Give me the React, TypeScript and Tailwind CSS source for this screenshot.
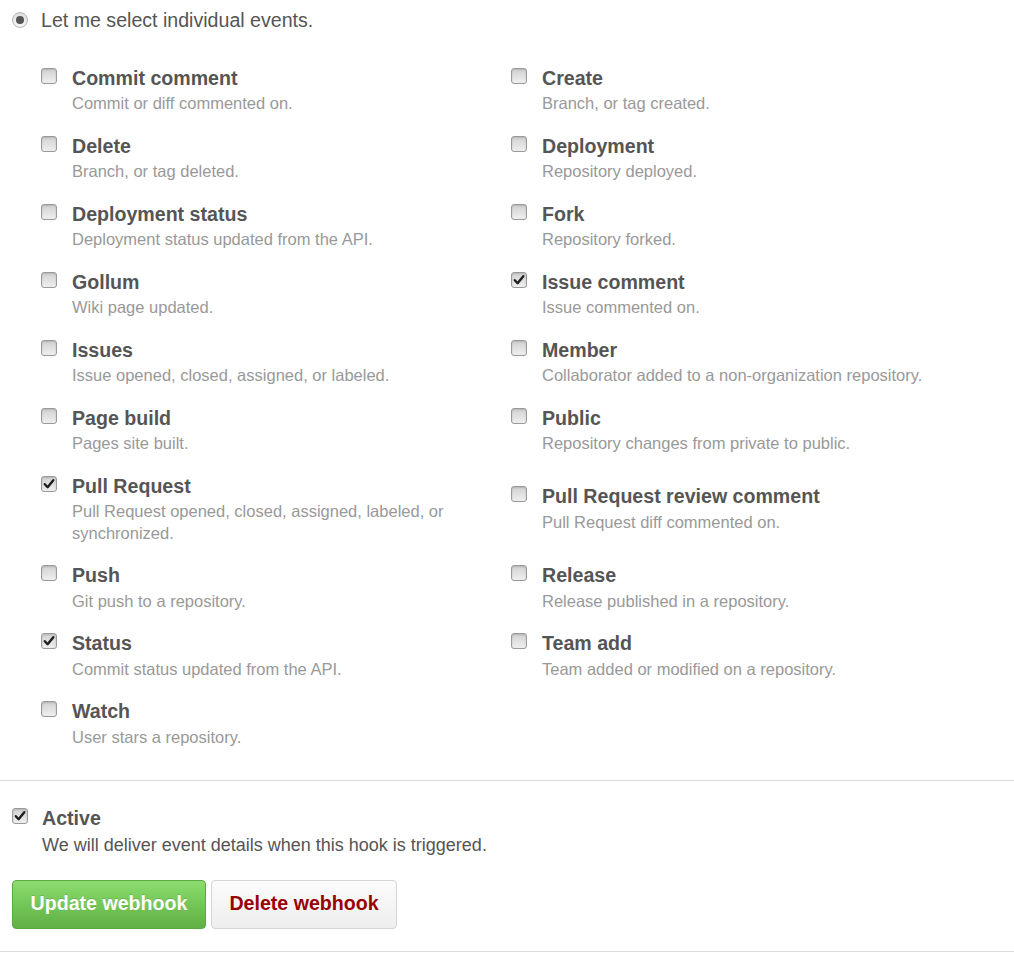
import React from "react";

type Ev = { title: string; desc: string; checked?: boolean };

const rows: [Ev, Ev | null][] = [
  [
    { title: "Commit comment", desc: "Commit or diff commented on." },
    { title: "Create", desc: "Branch, or tag created." },
  ],
  [
    { title: "Delete", desc: "Branch, or tag deleted." },
    { title: "Deployment", desc: "Repository deployed." },
  ],
  [
    { title: "Deployment status", desc: "Deployment status updated from the API." },
    { title: "Fork", desc: "Repository forked." },
  ],
  [
    { title: "Gollum", desc: "Wiki page updated." },
    { title: "Issue comment", desc: "Issue commented on.", checked: true },
  ],
  [
    { title: "Issues", desc: "Issue opened, closed, assigned, or labeled." },
    { title: "Member", desc: "Collaborator added to a non-organization repository." },
  ],
  [
    { title: "Page build", desc: "Pages site built." },
    { title: "Public", desc: "Repository changes from private to public." },
  ],
  [
    {
      title: "Pull Request",
      desc: "Pull Request opened, closed, assigned, labeled, or synchronized.",
      checked: true,
    },
    { title: "Pull Request review comment", desc: "Pull Request diff commented on." },
  ],
  [
    { title: "Push", desc: "Git push to a repository." },
    { title: "Release", desc: "Release published in a repository." },
  ],
  [
    { title: "Status", desc: "Commit status updated from the API.", checked: true },
    { title: "Team add", desc: "Team added or modified on a repository." },
  ],
  [{ title: "Watch", desc: "User stars a repository." }, null],
];

function Checkbox({ checked }: { checked?: boolean }) {
  return (
    <span className="relative mt-[3px] flex h-[16px] w-[16px] shrink-0 items-center justify-center rounded-[3px] border border-[#9a9a9a] bg-gradient-to-b from-[#d2d2d2] to-[#efefef] shadow-[inset_0_1px_2px_rgba(0,0,0,0.15)]">
      {checked && (
        <svg width="12" height="12" viewBox="0 0 12 12" className="block">
          <path
            d="M1.8 6.2 L4.6 9.2 L10.3 2.2"
            fill="none"
            stroke="#1e1e1e"
            strokeWidth="2.4"
            strokeLinecap="round"
            strokeLinejoin="round"
          />
        </svg>
      )}
    </span>
  );
}

function EventItem({ ev }: { ev: Ev }) {
  return (
    <div className="flex items-start gap-[15px] self-center">
      <Checkbox checked={ev.checked} />
      <div className="min-w-0">
        <div className="text-[19.6px] font-bold leading-[27px] text-[#555]">{ev.title}</div>
        <div className="pt-[1.5px] text-[16.5px] leading-[21.5px] text-[#999]">{ev.desc}</div>
      </div>
    </div>
  );
}

export default function App() {
  return (
    <div
      className="min-h-[953px] w-[1014px] bg-white text-[#555]"
      style={{ fontFamily: '"Liberation Sans", Arial, Helvetica, sans-serif' }}
    >
      <div className="px-[12px] pt-[8px]">
        <div className="flex items-center gap-[13px]">
          <span className="flex h-[16px] w-[16px] items-center justify-center rounded-full border border-[#b5b5b5] bg-gradient-to-b from-[#dedede] to-[#f6f6f6]">
            <span className="h-[8px] w-[8px] rounded-full bg-[#555]" />
          </span>
          <span className="text-[19.6px] leading-[24px] text-[#555]">Let me select individual events.</span>
        </div>

        <div className="ml-[29px] mt-[32.5px] grid grid-cols-[470px_1fr] gap-y-[18px]">
          {rows.map(([a, b], i) => (
            <React.Fragment key={i}>
              <EventItem ev={a} />
              {b ? <EventItem ev={b} /> : <div />}
            </React.Fragment>
          ))}
        </div>
      </div>

      <div className="mt-[31.5px] h-px w-full bg-[#dcdcdc]" />

      <div className="px-[12px] pt-[24.5px]">
        <div className="flex items-start gap-[14px]">
          <Checkbox checked />
          <div>
            <div className="text-[19.6px] font-bold leading-[27px] text-[#555]">Active</div>
            <div className="text-[18px] leading-[26px] text-[#555]">
              We will deliver event details when this hook is triggered.
            </div>
          </div>
        </div>

        <div className="mt-[21.5px] flex gap-[5px]">
          <button className="h-[49px] w-[194px] rounded-[4px] border border-[#5ca941] bg-gradient-to-b from-[#8add6d] to-[#60b044] text-[19.6px] font-bold text-white [text-shadow:0_-1px_0_rgba(0,0,0,0.15)]">
            Update webhook
          </button>
          <button className="h-[49px] w-[186px] rounded-[4px] border border-[#d5d5d5] bg-gradient-to-b from-[#fcfcfc] to-[#eeeeee] text-[19.6px] font-bold text-[#990000]">
            Delete webhook
          </button>
        </div>
      </div>

      <div className="mt-[22px] h-px w-full bg-[#dcdcdc]" />
    </div>
  );
}
